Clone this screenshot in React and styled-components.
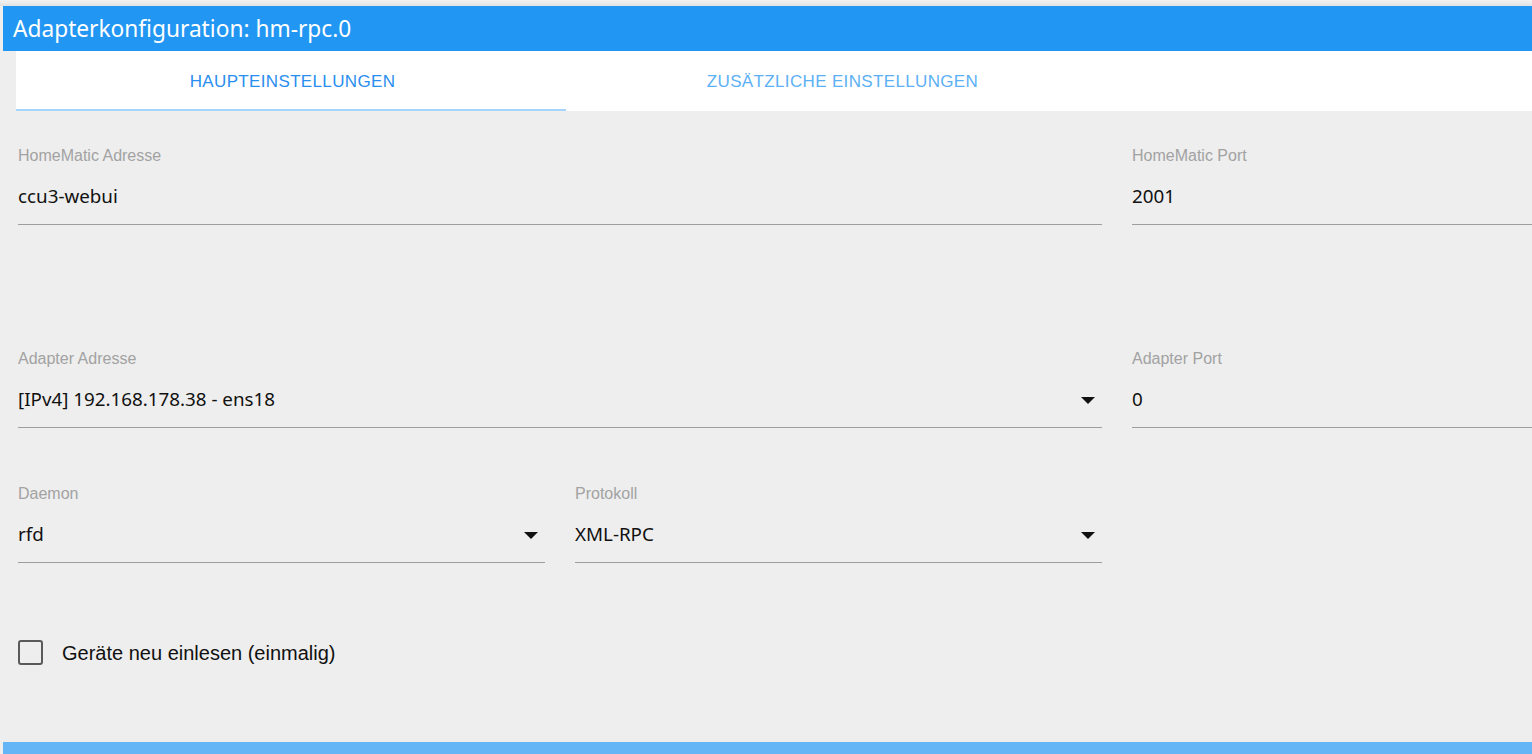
import React, { useState } from 'react';
import styled, { createGlobalStyle } from 'styled-components';

const GlobalStyle = createGlobalStyle`
  html, body {
    margin: 0;
    padding: 0;
    background: #eeeeee;
    overflow: hidden;
  }
`;

const Page = styled.div`
  width: 1532px;
  height: 754px;
  overflow: hidden;
  background: #eeeeee;
`;

const TopStrip = styled.div`
  height: 6px;
  background: linear-gradient(#f2f2f2, #e2e2e2);
`;

const Header = styled.div`
  margin-left: 3px;
  height: 45px;
  background: #2196f3;
  display: flex;
  align-items: center;
  padding-left: 10px;
  color: #fff;
  font-family: "Noto Sans", "Open Sans", sans-serif;
  font-size: 22.7px;
`;

const TabBar = styled.div`
  margin-left: 16px;
  height: 60px;
  background: #fff;
  display: flex;
`;

const Tab = styled.div`
  width: 550px;
  display: flex;
  align-items: center;
  justify-content: center;
  box-sizing: border-box;
  padding-top: 4px;
  padding-left: 3px;
  font-family: "Liberation Sans", Arial, sans-serif;
  font-size: 17px;
  letter-spacing: 0.35px;
  text-transform: uppercase;
  color: ${(p) => (p.active ? '#2a8ef0' : '#5cb0f6')};
  border-bottom: 2px solid ${(p) => (p.active ? '#a6d4fa' : 'transparent')};
  cursor: pointer;
`;

const Content = styled.div`
  padding-left: 18px;
  padding-top: 35px;
`;

const Row = styled.div`
  display: flex;
  gap: 30px;
  margin-top: ${(p) => p.gap || 0}px;
`;

const Field = styled.div`
  width: ${(p) => (p.w ? `${p.w}px` : 'auto')};
  flex: ${(p) => (p.w ? '0 0 auto' : '1')};
  display: flex;
  flex-direction: column;
`;

const Label = styled.div`
  height: 20px;
  line-height: 20px;
  font-family: "Liberation Sans", Arial, sans-serif;
  font-size: 16px;
  color: #a2a2a2;
  white-space: nowrap;
`;

const ValueRow = styled.div`
  margin-top: 15px;
  height: 30px;
  padding-bottom: 13px;
  border-bottom: 1px solid #9e9e9e;
  display: flex;
  align-items: center;
  justify-content: space-between;
`;

const Value = styled.span`
  font-family: "Noto Sans", "Open Sans", sans-serif;
  font-size: 18.8px;
  color: #111;
  white-space: nowrap;
`;

const Arrow = styled.svg`
  width: 14px;
  height: 7px;
  margin-right: 7px;
  margin-top: 2px;
`;

const CheckRow = styled.label`
  margin-top: 76px;
  display: flex;
  align-items: center;
  gap: 19px;
  cursor: pointer;
`;

const Box = styled.span`
  width: 25px;
  height: 25px;
  box-sizing: border-box;
  border: 2px solid #5a5a5a;
  border-radius: 3px;
  background: ${(p) => (p.checked ? '#2196f3' : 'transparent')};
`;

const CheckText = styled.span`
  font-family: "Liberation Sans", Arial, sans-serif;
  font-size: 20px;
  color: #111;
  margin-top: 3px;
`;

const BottomBar = styled.div`
  margin-top: 77px;
  margin-left: 3px;
  height: 12px;
  background: #64b5f6;
`;

const DropArrow = () => (
  <Arrow viewBox="0 0 14 7">
    <path d="M0 0 L14 0 L7 7 Z" fill="#111" />
  </Arrow>
);

const TextField = ({ label, value, w, select }) => (
  <Field w={w}>
    <Label>{label}</Label>
    <ValueRow>
      <Value>{value}</Value>
      {select && <DropArrow />}
    </ValueRow>
  </Field>
);

const App = () => {
  const [tab, setTab] = useState('main');
  const [checked, setChecked] = useState(false);

  return (
    <Page>
      <GlobalStyle />
      <TopStrip />
      <Header>Adapterkonfiguration: hm-rpc.0</Header>
      <TabBar>
        <Tab active={tab === 'main'} onClick={() => setTab('main')}>
          Haupteinstellungen
        </Tab>
        <Tab active={tab === 'extra'} onClick={() => setTab('extra')}>
          Zusätzliche Einstellungen
        </Tab>
      </TabBar>
      <Content>
        <Row>
          <TextField label="HomeMatic Adresse" value="ccu3-webui" w={1084} />
          <TextField label="HomeMatic Port" value="2001" />
        </Row>
        <Row gap={124}>
          <TextField label="Adapter Adresse" value="[IPv4] 192.168.178.38 - ens18" w={1084} select />
          <TextField label="Adapter Port" value="0" />
        </Row>
        <Row gap={56}>
          <TextField label="Daemon" value="rfd" w={527} select />
          <TextField label="Protokoll" value="XML-RPC" w={527} select />
        </Row>
        <CheckRow onClick={() => setChecked(!checked)}>
          <Box checked={checked} />
          <CheckText>Geräte neu einlesen (einmalig)</CheckText>
        </CheckRow>
      </Content>
      <BottomBar />
    </Page>
  );
};

export default App;
